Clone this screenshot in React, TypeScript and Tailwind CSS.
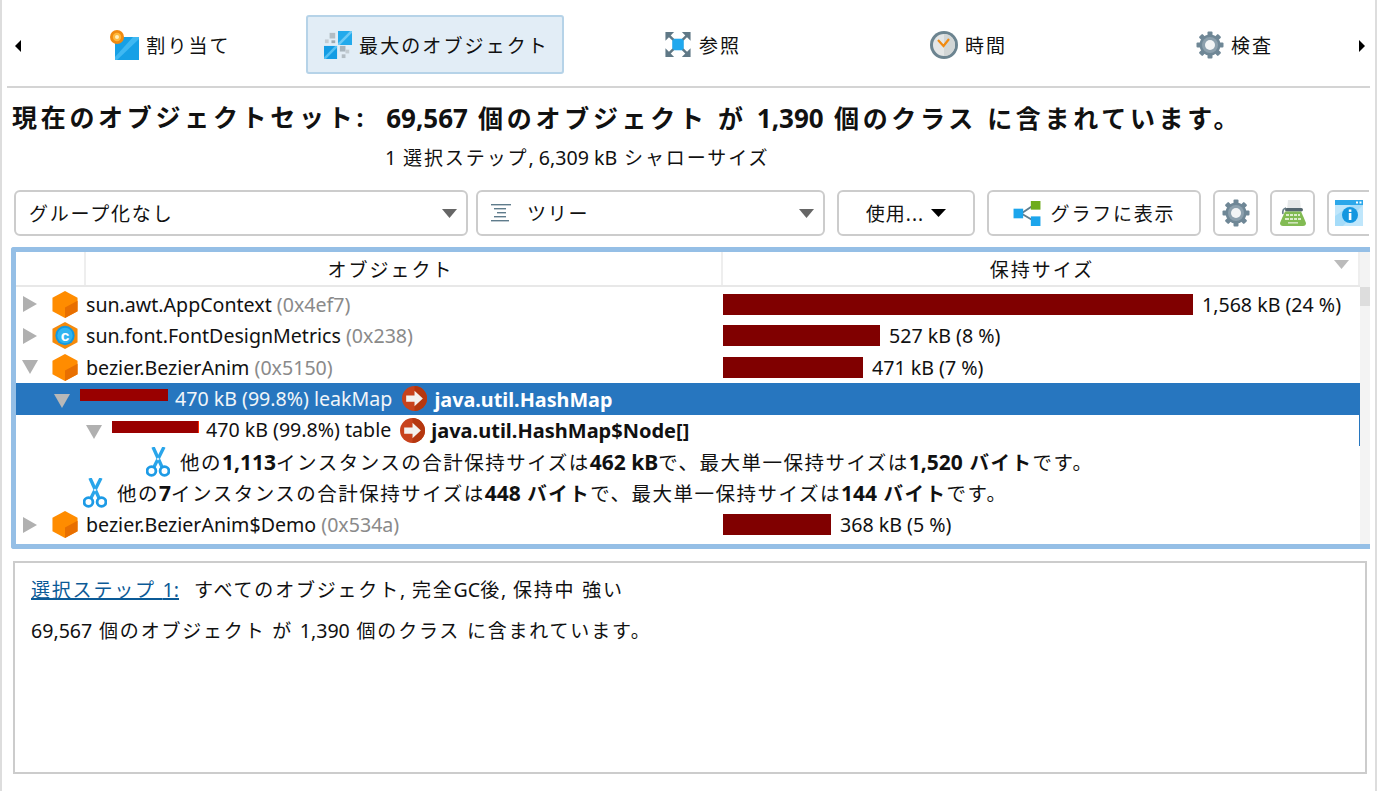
import React from "react";

const FONT = '"Noto Sans","Noto Sans CJK JP",sans-serif';

function Tri({ dir, cls }: { dir: "r" | "d" | "l"; cls: string }) {
  const pts = dir === "r" ? "0,0 14,8 0,16" : dir === "l" ? "14,0 0,8 14,16" : "0,0 16,0 8,14";
  return (
    <svg viewBox={dir === "d" ? "0 0 16 14" : "0 0 14 16"} preserveAspectRatio="none" className={cls}>
      <polygon points={pts} fill="currentColor" />
    </svg>
  );
}

function Cube() {
  return (
    <svg viewBox="0 0 26 28" className="w-[26px] h-[27px] shrink-0">
      <polygon points="13,0 26,7 26,21 13,28 0,21 0,7" fill="#ff8c00" />
      <polygon points="26,10 26,21 13,28 13,17" fill="#e86f00" />
    </svg>
  );
}

function ClassIcon() {
  return (
    <svg viewBox="0 0 26 28" className="w-[26px] h-[27px] shrink-0">
      <polygon points="13,0 26,7 26,21 13,28 0,21 0,7" fill="#f58a0b" />
      <circle cx="13" cy="14" r="10" fill="#1499e0" />
      <circle cx="13" cy="14" r="8" fill="#30b4f0" />
      <text x="13" y="19.5" textAnchor="middle" fontSize="16" fontWeight="700" fill="#fff" fontFamily="Liberation Sans">c</text>
    </svg>
  );
}

function ArrowIcon() {
  return (
    <svg viewBox="0 0 24 24" className="w-[25px] h-[25px] shrink-0">
      <circle cx="12" cy="12" r="12" fill="#c8421c" />
      <path d="M12 0a12 12 0 0 1 0 24z" fill="#b5370f" />
      <polygon points="4,9 12,9 12,4.5 20,12 12,19.5 12,15 4,15" fill="#f4f1ee" />
    </svg>
  );
}

function Scissors() {
  return (
    <svg viewBox="0 0 24 30" className="w-[24px] h-[30px] shrink-0" fill="none">
      <path d="M7 0 L16 20" stroke="#29a5ea" strokeWidth="3.4" />
      <path d="M18 0 L8 20" stroke="#29a5ea" strokeWidth="3.4" />
      <circle cx="5.5" cy="24" r="4.4" stroke="#1d9be6" strokeWidth="2.8" />
      <circle cx="18.5" cy="24" r="4.4" stroke="#1d9be6" strokeWidth="2.8" />
      <circle cx="12" cy="12" r="1.3" fill="#cde9fa" />
    </svg>
  );
}

function Gear({ cls }: { cls: string }) {
  const teeth = [0, 45, 90, 135, 180, 225, 270, 315];
  return (
    <svg viewBox="0 0 28 28" className={cls}>
      {teeth.map((a) => (
        <rect key={a} x="11.5" y="0.5" width="5" height="6" rx="1" fill="#6f8796" transform={`rotate(${a} 14 14)`} />
      ))}
      <circle cx="14" cy="14" r="10.5" fill="#6f8796" />
      <circle cx="14" cy="14" r="8" fill="#8ca0ad" />
      <circle cx="14" cy="14" r="5" fill="#f2f4f5" />
    </svg>
  );
}

function AllocIcon() {
  return (
    <svg viewBox="0 0 29 30" className="w-[29px] h-[30px] shrink-0">
      <rect x="5" y="7" width="24" height="23" fill="#16a0e6" />
      <polygon points="29,7 29,9 7,30 5,30 5,27 23,7" fill="#3fb8f2" />
      <circle cx="7" cy="7" r="7" fill="#f08a10" />
      <circle cx="7" cy="7" r="4.2" fill="#ffb83c" />
      <circle cx="7" cy="7" r="2" fill="#fff0c0" />
    </svg>
  );
}

function BiggestIcon() {
  return (
    <svg viewBox="0 0 30 30" className="w-[28px] h-[30px] shrink-0">
      <rect x="15" y="0" width="15" height="15" fill="#23aaec" />
      <polygon points="30,0 30,2 17,15 15,15 15,13 28,0" fill="#6ccaf6" />
      <rect x="0" y="16" width="14" height="14" fill="#139ce4" />
      <polygon points="14,16 14,18 2,30 0,30 0,28 12,16" fill="#55c0f2" />
      <rect x="6" y="2" width="6" height="6" fill="#b3bdc4" />
      <rect x="1" y="9" width="4" height="4" fill="#c3ccd2" />
      <rect x="8" y="10" width="4" height="3" fill="#9eabb3" />
      <rect x="17" y="16" width="6" height="6" fill="#a8b4bc" />
      <rect x="23" y="20" width="4" height="4" fill="#c3ccd2" />
      <rect x="19" y="25" width="4" height="4" fill="#b3bdc4" />
    </svg>
  );
}

function RefIcon() {
  return (
    <svg viewBox="0 0 28 28" className="w-[28px] h-[27px] shrink-0">
      <rect x="8" y="8" width="12" height="12" fill="#20a8ee" />
      <g stroke="#5f7886" strokeWidth="2.6">
        <path d="M3 3 L9 9" />
        <path d="M25 3 L19 9" />
        <path d="M3 25 L9 19" />
        <path d="M25 25 L19 19" />
      </g>
      <g fill="#5f7886">
        <polygon points="1,1 10,1 1,10" />
        <polygon points="27,1 18,1 27,10" />
        <polygon points="1,27 10,27 1,18" />
        <polygon points="27,27 18,27 27,18" />
      </g>
    </svg>
  );
}

function ClockIcon() {
  return (
    <svg viewBox="0 0 28 28" className="w-[28px] h-[28px] shrink-0">
      <circle cx="14" cy="14" r="14" fill="#6c8490" />
      <circle cx="14" cy="14" r="11" fill="#e4e6e6" />
      <path d="M14 3a11 11 0 0 1 0 22z" fill="#d2d6d6" />
      <path d="M8 9 L13.5 15 L19 8" stroke="#f18a10" strokeWidth="2.2" fill="none" />
    </svg>
  );
}

function TreeIcon() {
  return (
    <svg viewBox="0 0 22 20" className="w-[22px] h-[20px] shrink-0">
      <g fill="#5f7c8c">
        <rect x="1" y="1" width="20" height="1.4" />
        <rect x="4" y="5" width="12" height="1.4" />
        <rect x="7" y="9" width="9" height="1.4" />
        <rect x="4" y="13" width="12" height="1.4" />
        <rect x="1" y="17" width="18" height="1.4" />
      </g>
    </svg>
  );
}

function GraphIcon() {
  return (
    <svg viewBox="0 0 28 26" className="w-[28px] h-[25px] shrink-0">
      <path d="M8 13 L20 5 M8 13 L20 20" stroke="#5f7c8c" strokeWidth="2" />
      <rect x="0" y="8" width="10" height="10" fill="#1ca5ec" />
      <rect x="18" y="0" width="10" height="9" fill="#6eac1c" />
      <rect x="18" y="16" width="10" height="10" fill="#1ca5ec" />
    </svg>
  );
}

function TypewriterIcon() {
  return (
    <svg viewBox="0 0 28 26" className="w-[28px] h-[26px] shrink-0">
      <polygon points="9,0 21,0 22,10 8,10" fill="#e6e8e9" />
      <path d="M4 14 Q3 9 7 8" stroke="#6b7f8a" strokeWidth="1.6" fill="none" />
      <rect x="6" y="8" width="18" height="3.5" rx="1.7" fill="#54666f" />
      <path d="M6 11.5 H22 Q25 18 27 23 Q27 26 24 26 H4 Q1 26 1 23 Q3 18 6 11.5z" fill="#82bb53" />
      <rect x="7" y="14" width="14" height="2" fill="#dcedcb" />
      <rect x="6" y="18" width="16" height="2" fill="#dcedcb" />
      <g fill="#82bb53">
        <rect x="10" y="14" width="1" height="6" />
        <rect x="14" y="14" width="1" height="6" />
        <rect x="18" y="14" width="1" height="6" />
      </g>
      <rect x="9" y="22" width="10" height="1.6" fill="#cfe3ba" />
    </svg>
  );
}

function InfoIcon() {
  return (
    <svg viewBox="0 0 28 26" className="w-[28px] h-[26px] shrink-0">
      <rect x="0" y="0" width="28" height="26" fill="#bfe6fb" />
      <polygon points="0,26 0,16 16,5 28,5 8,26" fill="#a5dcf9" />
      <rect x="0" y="0" width="28" height="5" fill="#2ba7ea" />
      <rect x="21" y="1.5" width="2" height="2" fill="#fff" />
      <rect x="24.5" y="1.5" width="2" height="2" fill="#fff" />
      <circle cx="15" cy="15" r="8" fill="#1497e0" />
      <rect x="13.8" y="13" width="2.6" height="7" fill="#fff" />
      <rect x="13.8" y="9.5" width="2.6" height="2.4" fill="#fff" />
    </svg>
  );
}

function Tab({ icon, label, active }: { icon: React.ReactNode; label: string; active?: boolean }) {
  return (
    <div
      className={
        "w-[258px] h-[59px] shrink-0 rounded-[3px] flex items-center justify-center gap-[7px] pl-[3px] text-[19px] tracking-[2.1px] " +
        (active ? "bg-[#e2edf6] border-2 border-[#b6d3e8]" : "")
      }
    >
      {icon}
      <span className="pt-[3px]">{label}</span>
    </div>
  );
}

const btn = "h-[46px] shrink-0 bg-white border-2 border-[#cccccc] rounded-[6px] flex items-center";
const hex = "text-[#8a8a8a]";

function La({ children }: { children: React.ReactNode }) {
  return <span className="tracking-normal text-[19.6px]">{children}</span>;
}
function BL({ children }: { children: React.ReactNode }) {
  return <span className="tracking-normal text-[21px]">{children}</span>;
}
function Big({ children }: { children: React.ReactNode }) {
  return <span className="tracking-normal text-[26px]">{children}</span>;
}

function Row({ left, right, selected, pad }: { left: React.ReactNode; right?: React.ReactNode; selected?: boolean; pad: string }) {
  return (
    <div className={"h-[31.5px] shrink-0 flex items-center w-full " + (selected ? "bg-[#2776bf] text-[#f1f5f9]" : "")}>
      <div className={"w-[707px] shrink-0 flex items-center whitespace-nowrap " + pad}>{left}</div>
      {right}
    </div>
  );
}

function Bar({ w, label }: { w: number; label: string }) {
  return (
    <div className="flex items-center gap-[9px]">
      <div className="h-[21px] bg-[#800000]" style={{ width: w }} />
      <span className="pt-px">{label}</span>
    </div>
  );
}

export default function App() {
  return (
    <div className="w-[1377px] h-[791px] bg-white text-[#111] overflow-hidden border-x-2 border-[#dddddd]" style={{ fontFamily: FONT }}>
      {/* tabs */}
      <div className="flex items-center pt-[15px] h-[74px] pl-[38px] relative">
        <Tri dir="l" cls="absolute left-[13px] top-[40px] w-[6px] h-[12px] text-black" />
        <div className="flex gap-[8px]">
          <Tab icon={<AllocIcon />} label="割り当て" />
          <Tab icon={<BiggestIcon />} label="最大のオブジェクト" active />
          <Tab icon={<RefIcon />} label="参照" />
          <Tab icon={<ClockIcon />} label="時間" />
          <Tab icon={<Gear cls="w-[28px] h-[28px] shrink-0" />} label="検査" />
        </div>
        <Tri dir="r" cls="absolute left-[1357px] top-[40px] w-[6px] h-[12px] text-black" />
      </div>
      <div className="ml-[5px] mr-[5px] mt-[12px] h-[2px] bg-[#d4d4d4]" />

      {/* title */}
      <div className="pl-[10px] mt-[14px] h-[32px] flex items-center text-[25px] font-bold tracking-[3.7px] whitespace-nowrap text-[#111]">
        <span>現在のオブジェクトセット:</span>
        <span className="ml-[19px]"><Big>69,567</Big> 個のオブジェクト が <Big>1,390</Big> 個のクラス に含まれています。</span>
      </div>
      <div className="pl-[383px] mt-[10px] h-[28px] flex items-center text-[19px] tracking-[1.9px] whitespace-pre">
        <La>1</La> 選択ステップ<La>, 6,309 kB</La> シャローサイズ
      </div>

      {/* toolbar */}
      <div className="mt-[18px] ml-[12px] w-[1355px] flex gap-[8px] overflow-hidden text-[19px] tracking-[1.8px] whitespace-nowrap">
        <div className={btn + " w-[454px] pl-[13px] pr-[9px] justify-between"}>
          <span className="pt-[2px]">グループ化なし</span>
          <Tri dir="d" cls="w-[15px] h-[9px] text-[#666]" />
        </div>
        <div className={btn + " w-[349px] pl-[12px] pr-[9px]"}>
          <TreeIcon />
          <span className="ml-[15px] flex-1 pt-[2px]">ツリー</span>
          <Tri dir="d" cls="w-[15px] h-[9px] text-[#666]" />
        </div>
        <div className={btn + " w-[138px] justify-center gap-[7px] ml-[4px]"}>
          <span className="pt-[2px] tracking-[1px]">使用...</span>
          <Tri dir="d" cls="w-[15px] h-[8px] text-black" />
        </div>
        <div className={btn + " w-[214px] justify-center gap-[10px] ml-[4px]"}>
          <GraphIcon />
          <span className="pt-[2px]">グラフに表示</span>
        </div>
        <div className={btn + " w-[45px] justify-center ml-[4px]"}>
          <Gear cls="w-[28px] h-[28px] shrink-0" />
        </div>
        <div className={btn + " w-[45px] justify-center ml-[4px]"}>
          <TypewriterIcon />
        </div>
        <div className={btn + " w-[60px] pl-[6px] ml-[4px] rounded-r-none"}>
          <InfoIcon />
        </div>
      </div>

      {/* table */}
      <div className="mt-[11px] ml-[9px] w-[1359px] h-[302px] border-l-[5px] border-y-[5px] border-[#95bfe6] rounded-l-[3px] flex overflow-hidden text-[19.6px] leading-none">
        <div className="w-[1344px] shrink-0 flex flex-col">
          <div className="h-[35px] shrink-0 flex items-center border-b-2 border-[#e8e8e8] text-[19px] tracking-[2px]">
            <div className="w-[70px] h-full border-r-2 border-[#eeeeee]" />
            <div className="w-[637px] h-full border-r-2 border-[#eeeeee] flex items-center justify-center pr-[26px] pt-[3px]">オブジェクト</div>
            <div className="flex-1 h-full border-r-2 border-[#eeeeee] relative flex items-center justify-center pt-[3px] pl-[3px]">
              保持サイズ
              <Tri dir="d" cls="absolute right-[9px] top-[8px] w-[15px] h-[9px] text-[#bbbbbb]" />
            </div>
          </div>
          <div className="pt-[1.5px] flex flex-col">
            <Row
              pad="pl-[7px]"
              left={<><Tri dir="r" cls="w-[14px] h-[16px] text-[#b0b0b0]" /><span className="ml-[15px] flex"><Cube /></span><span className="ml-[8px] pt-px">sun.awt.AppContext <span className={hex}>(0x4ef7)</span></span></>}
              right={<Bar w={470} label="1,568 kB (24 %)" />}
            />
            <Row
              pad="pl-[7px]"
              left={<><Tri dir="r" cls="w-[14px] h-[16px] text-[#b0b0b0]" /><span className="ml-[15px] flex"><ClassIcon /></span><span className="ml-[8px] pt-px">sun.font.FontDesignMetrics <span className={hex}>(0x238)</span></span></>}
              right={<Bar w={157} label="527 kB (8 %)" />}
            />
            <Row
              pad="pl-[7px]"
              left={<><Tri dir="d" cls="w-[16px] h-[14px] text-[#b0b0b0] -ml-px" /><span className="ml-[14px] flex"><Cube /></span><span className="ml-[8px] pt-px">bezier.BezierAnim <span className={hex}>(0x5150)</span></span></>}
              right={<Bar w={140} label="471 kB (7 %)" />}
            />
            <Row
              selected
              pad="pl-[38px]"
              left={<><Tri dir="d" cls="w-[16px] h-[14px] text-[#b8b8b8] mt-[4px]" /><div className="ml-[10px] -mt-[7px] w-[88px] h-[12px] bg-[#990000]" /><span className="ml-[7px]">470 kB (99.8%) leakMap</span><span className="ml-[10px] flex"><ArrowIcon /></span><span className="ml-[7px] font-bold text-[19.8px] mt-[3px] text-white">java.util.HashMap</span></>}
            />
            <Row
              pad="pl-[70px]"
              left={<><Tri dir="d" cls="w-[16px] h-[14px] text-[#b0b0b0] mt-[4px]" /><div className="ml-[10px] -mt-[7px] w-[87px] h-[12px] bg-[#990000] border-r border-[#ff2a00]" /><span className="ml-[7px]">470 kB (99.8%) table</span><span className="ml-[9px] flex"><ArrowIcon /></span><span className="ml-[6px] font-bold text-[20px] mt-[2px]">java.util.HashMap$Node[]</span></>}
              right={<div className="ml-[636px] w-px h-full bg-[#2776bf]" />}
            />
            <Row
              pad="pl-[130px]"
              left={<><Scissors /><span className="ml-[10px] pt-px text-[19.5px] tracking-[1.5px]">他の<b><BL>1,113</BL></b>インスタンスの合計保持サイズは<b><BL>462 kB</BL></b>で、最大単一保持サイズは<b><BL>1,520</BL> バイト</b>です。</span></>}
            />
            <Row
              pad="pl-[67px]"
              left={<><Scissors /><span className="ml-[10px] pt-px text-[19.5px] tracking-[1.5px]">他の<b><BL>7</BL></b>インスタンスの合計保持サイズは<b><BL>448</BL> バイト</b>で、最大単一保持サイズは<b><BL>144</BL> バイト</b>です。</span></>}
            />
            <Row
              pad="pl-[7px]"
              left={<><Tri dir="r" cls="w-[14px] h-[16px] text-[#b0b0b0]" /><span className="ml-[15px] flex"><Cube /></span><span className="ml-[8px] pt-px">bezier.BezierAnim$Demo <span className={hex}>(0x534a)</span></span></>}
              right={<Bar w={108} label="368 kB (5 %)" />}
            />
          </div>
        </div>
        <div className="flex-1 bg-[#f3f3f3] pt-[35px]">
          <div className="h-[19px] bg-[#dddddd]" />
        </div>
      </div>

      {/* details */}
      <div className="mt-[12px] ml-[11px] w-[1354px] h-[213px] border-2 border-[#cccccc] pl-[16px] pt-[13px] text-[19px] tracking-[1.8px]">
        <div className="h-[28px] flex items-center whitespace-pre">
          <span className="text-[#0b5a96] underline decoration-2">選択ステップ <La>1:</La></span>
          <span className="ml-[15px]">すべてのオブジェクト<La>,</La> 完全<La>GC</La>後<La>,</La> 保持中 強い</span>
        </div>
        <div className="mt-[13px] h-[28px] flex items-center whitespace-pre">
          <span><La>69,567</La> 個のオブジェクト が <La>1,390</La> 個のクラス に含まれています。</span>
        </div>
      </div>
    </div>
  );
}
